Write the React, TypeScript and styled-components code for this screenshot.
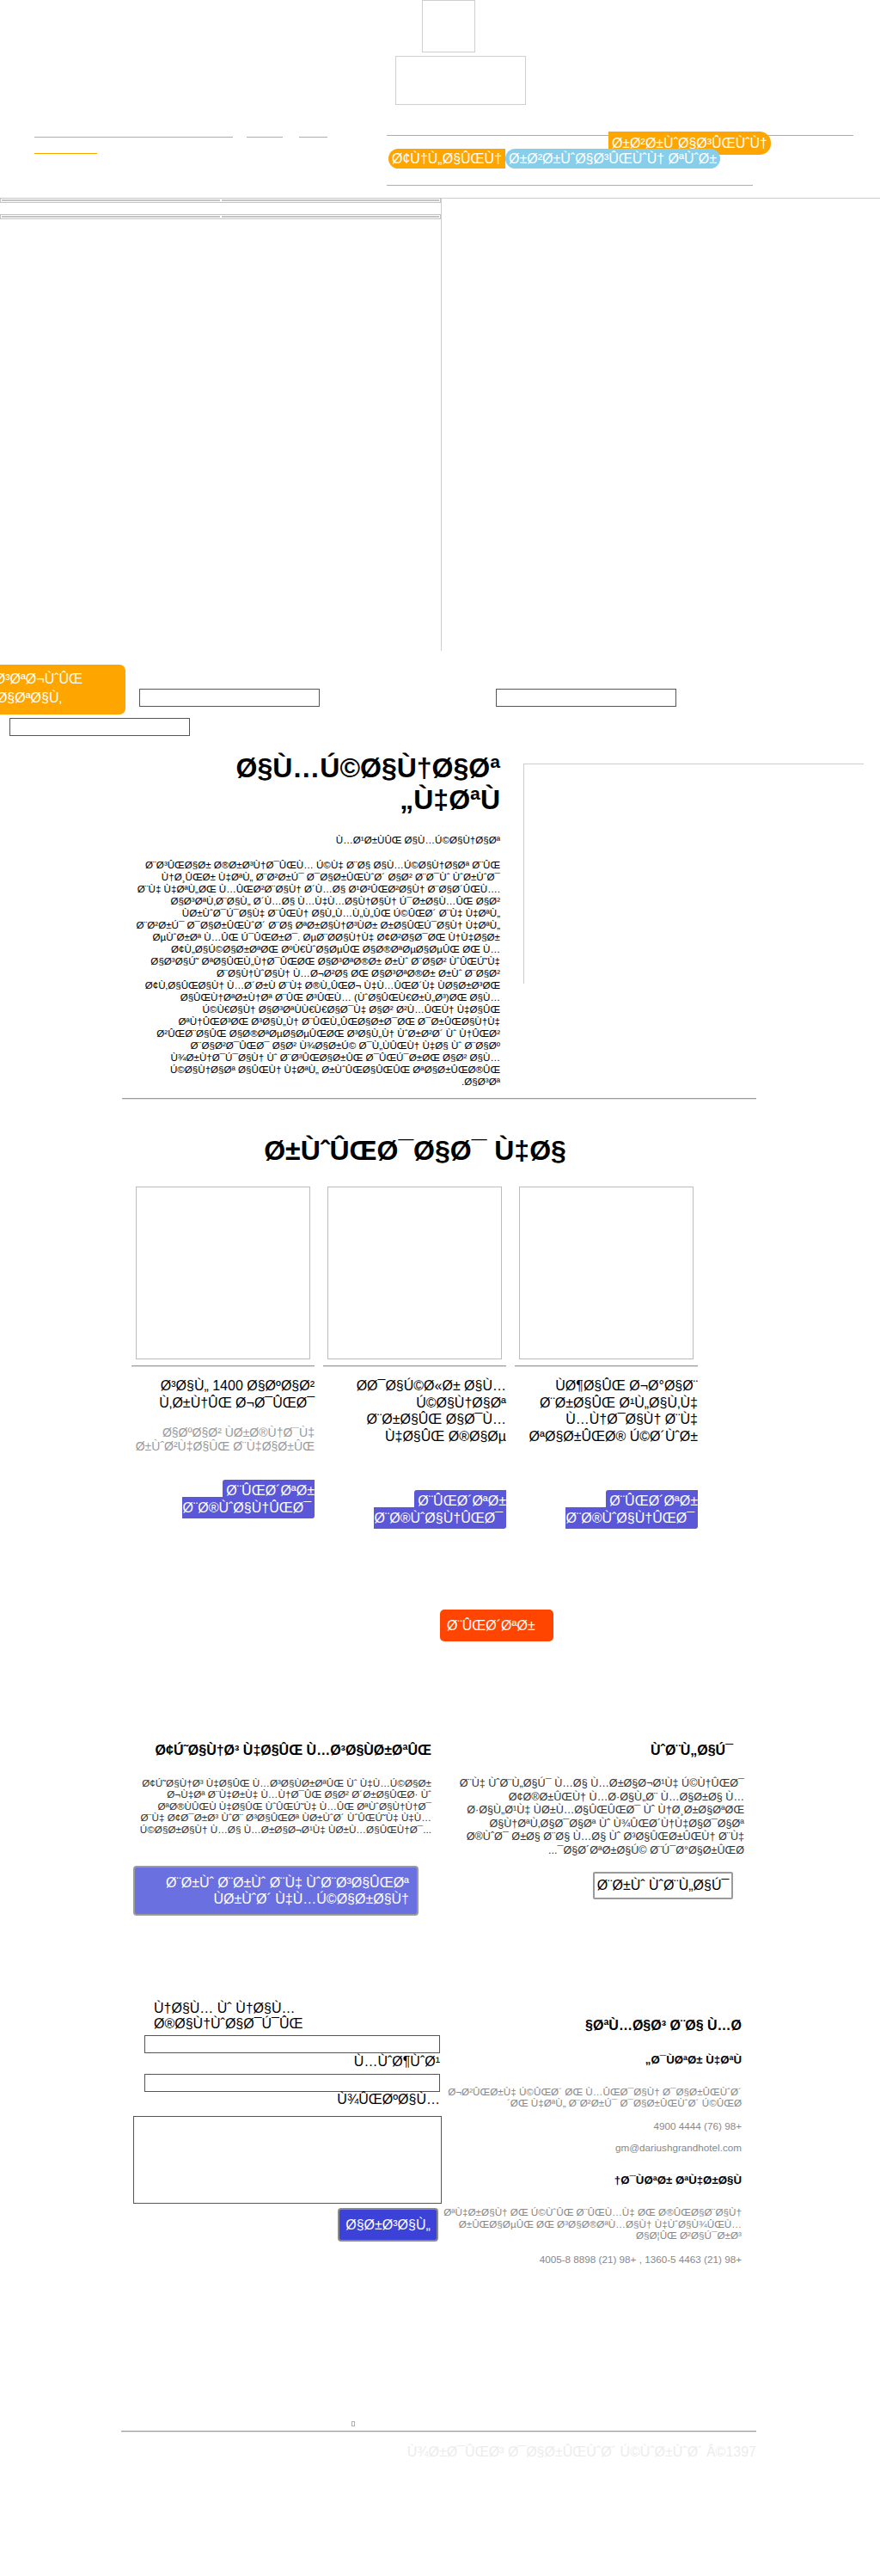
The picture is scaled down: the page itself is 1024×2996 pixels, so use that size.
import React from "react";
import styled, { createGlobalStyle } from "styled-components";

// the page was served as UTF-8 but read as windows-1252, so every Persian
// string shows up as Latin mojibake. Rebuild that from the real text.
// 0x81 has no cp1252 glyph and shows as nothing.
const CP1252: Record<number, string> = {
  0x80: "\u20AC", 0x81: "", 0x82: "\u201A", 0x83: "\u0192", 0x84: "\u201E", 0x85: "\u2026",
  0x86: "\u2020", 0x87: "\u2021", 0x88: "\u02C6", 0x89: "\u2030", 0x8a: "\u0160",
  0x8b: "\u2039", 0x8c: "\u0152", 0x8d: "", 0x8e: "\u017D", 0x8f: "", 0x90: "",
  0x91: "\u2018", 0x92: "\u2019", 0x93: "\u201C", 0x94: "\u201D", 0x95: "\u2022",
  0x96: "\u2013", 0x97: "\u2014", 0x98: "\u02DC", 0x99: "\u2122", 0x9a: "\u0161",
  0x9b: "\u203A", 0x9c: "\u0153", 0x9d: "", 0x9e: "\u017E", 0x9f: "\u0178",
};
const moj = (s: string) =>
  Array.from(new TextEncoder().encode(s), (b) => CP1252[b] ?? String.fromCharCode(b)).join("");

const ORANGE = "#ffa500";

const GlobalStyle = createGlobalStyle`
  html, body { margin: 0; padding: 0; background: #fff; }
  body { font-family: "Liberation Sans", Arial, sans-serif; color: #000; }
  * { box-sizing: border-box; }
`;

const Page = styled.div`
  width: 1024px;
  min-height: 2996px;
  overflow: hidden;
`;

/* ---------- header ---------- */

const Header = styled.header`
  display: flex;
  flex-direction: column;
  height: 122px;
`;

const LogoFrame = styled.div<{ $w: number; $h: number; $x: number; $top?: number }>`
  width: ${(p) => p.$w}px;
  height: ${(p) => p.$h}px;
  margin-left: ${(p) => p.$x}px;
  margin-top: ${(p) => p.$top ?? 0}px;
  border: 1px solid #cfcfcf;
`;

const NavBar = styled.nav`
  display: flex;
  height: 108px;
  padding-top: 25px;
`;

const LeftNav = styled.div`
  width: 450px;
  padding-left: 40px;
  display: flex;
  flex-direction: column;
`;

const LeftNavRow = styled.div<{ $h: number }>`
  display: flex;
  height: ${(p) => p.$h}px;
`;

const NavLink = styled.a<{ $w: number; $gap?: number }>`
  display: block;
  width: ${(p) => p.$w}px;
  height: 100%;
  margin-right: ${(p) => p.$gap ?? 0}px;
  border-bottom: 1px solid ${ORANGE};
`;

const RightNav = styled.div`
  width: 543px;
  display: flex;
  flex-direction: column;
  padding-top: 10px;
`;

const NavRowTop = styled.div`
  display: flex;
  justify-content: flex-end;
  height: 16px;
  padding-right: 96px;
  border-top: 1px solid ${ORANGE};
`;

const NavRow = styled.div`
  display: flex;
  height: 24px;
  padding-left: 2px;
`;

const NavRule = styled.div`
  width: 426px;
  margin-top: 18px;
  border-top: 1px solid ${ORANGE};
`;

const radius = { right: "0 13px 13px 0", left: "13px 0 0 13px", both: "13px" };

const Pill = styled.a<{ $bg: string; $round: keyof typeof radius; $h: number; $up?: number }>`
  display: inline-flex;
  align-items: center;
  height: ${(p) => p.$h}px;
  margin-top: ${(p) => -(p.$up ?? 0)}px;
  padding: 0 4px;
  background: ${(p) => p.$bg};
  border-radius: ${(p) => radius[p.$round]};
  color: #fff;
  font-size: 16px;
  white-space: nowrap;
`;

/* ---------- hero ---------- */

const Hero = styled.section`
  display: flex;
`;

const HeroSide = styled.div`
  width: 513px;
  display: flex;
  flex-direction: column;
  gap: 13px;
`;

const EmptyTable = styled.div`
  display: flex;
  gap: 2px;
  padding: 1px;
  border: 1px solid #c4c4c4;
`;

const EmptyCell = styled.div`
  flex: 1;
  height: 2px;
  border: 1px solid #c4c4c4;
`;

const InsetFrame = styled.div<{ $w: number; $h: number; $top?: number }>`
  width: ${(p) => p.$w}px;
  height: ${(p) => p.$h}px;
  margin-top: ${(p) => p.$top ?? 0}px;
  flex-shrink: 0;
  border-top: 1px solid #cdcdcd;
  border-left: 1px solid #cdcdcd;
`;

/* ---------- search ---------- */

const SearchRow = styled.div`
  display: flex;
  align-items: flex-start;
  margin-top: 16px;
  height: 58px;
`;

const SearchTab = styled.div`
  flex-shrink: 0;
  width: 224px;
  height: 58px;
  margin-left: -78px;
  padding: 6px 14px 0;
  background: ${ORANGE};
  border-radius: 0 7px 7px 0;
  color: #fff;
  font-size: 16px;
  line-height: 22px;
  text-align: center;
`;

const TextInput = styled.input<{ $x: number; $top?: number; $w?: number }>`
  display: block;
  width: ${(p) => p.$w ?? 210}px;
  height: 21px;
  margin: ${(p) => p.$top ?? 0}px 0 0 ${(p) => p.$x}px;
  padding: 1px 2px;
  border: 1px solid #555;
  background: #fff;
  font: 13px "Liberation Sans", Arial, sans-serif;
`;

/* ---------- about ---------- */

const About = styled.section`
  display: flex;
  gap: 27px;
  margin-top: 19px;
  padding-left: 157px;
`;

const AboutText = styled.div`
  width: 425px;
  direction: rtl;
  text-align: right;
`;

const BigTitle = styled.h2<{ $center?: boolean }>`
  margin: 0;
  font-size: 32px;
  line-height: 37px;
  font-weight: bold;
  ${(p) => (p.$center ? "text-align: center; direction: ltr;" : "")}
`;

const Lead = styled.p`
  margin: 21px 0 15px;
  font-size: 11.6px;
  line-height: 14px;
`;

const BodyText = styled.p`
  margin: 0;
  font-size: 11.6px;
  line-height: 14px;
`;

const Rule = styled.hr<{ $top: number; $x?: number; $w?: number }>`
  width: ${(p) => p.$w ?? 738}px;
  height: 0;
  margin: ${(p) => p.$top}px 0 0 ${(p) => p.$x ?? 142}px;
  border: 0;
  border-top: 1px solid #9c9c9c;
  border-bottom: 1px solid #e2e2e2;
`;

/* ---------- events ---------- */

const Events = styled.section`
  width: 660px;
  margin: 41px 0 0 153px;
`;

const CardGrid = styled.div`
  display: grid;
  grid-template-columns: repeat(3, 213px);
  column-gap: 10px;
  margin-top: 23px;
`;

const Card = styled.article`
  display: flex;
  flex-direction: column;
  text-align: right;
`;

const CardPicture = styled.div`
  height: 201px;
  margin: 0 5px;
  border: 1px solid #bdbdbd;
`;

const CardRule = styled.div`
  margin-top: 7px;
  border-top: 1px solid #9c9c9c;
  border-bottom: 1px solid #e2e2e2;
`;

const CardTitle = styled.h3<{ $measure: number }>`
  align-self: flex-end;
  max-width: ${(p) => p.$measure}px;
  margin: 12px 0 0;
  font-size: 16px;
  line-height: 19.5px;
  font-weight: normal;
`;

const CardNote = styled.p`
  margin: 17px 0 0;
  font-size: 14px;
  line-height: 16px;
  color: #9a9a9a;
`;

const CardAction = styled.div<{ $gap: number }>`
  margin-top: ${(p) => p.$gap}px;
  font-size: 16px;
  line-height: 20px;
`;

const ReadMore = styled.a`
  padding: 4px 4px;
  background: #5a57d8;
  color: #fff;
  border-radius: 3px;
  -webkit-box-decoration-break: slice;
  box-decoration-break: slice;
`;

const MoreRow = styled.div`
  margin: 96px 0 0 512px;
`;

const MoreButton = styled.a`
  display: block;
  width: 132px;
  height: 37px;
  padding: 9px 8px;
  background: #ff4500;
  border-radius: 5px;
  color: #fff;
  font-size: 16px;
  line-height: 19px;
`;

/* ---------- partners / blog ---------- */

const Split = styled.section<{ $top: number }>`
  display: flex;
  align-items: flex-start;
  margin-top: ${(p) => p.$top}px;
  padding-left: 155px;
`;

const Column = styled.div<{ $w: number; $x?: number }>`
  width: ${(p) => p.$w}px;
  margin-left: ${(p) => p.$x ?? 0}px;
  text-align: right;
  display: flex;
  flex-direction: column;
`;

const SmallTitle = styled.h4<{ $pr?: number }>`
  margin: 0;
  padding-right: ${(p) => p.$pr ?? 0}px;
  font-size: 16px;
  line-height: 18px;
  font-weight: bold;
`;

const Blurb = styled.p<{ $size: number; $lh: number; $rtl?: boolean }>`
  margin: 22px 0 0;
  font-size: ${(p) => p.$size}px;
  line-height: ${(p) => p.$lh}px;
  color: #333;
  direction: ${(p) => (p.$rtl ? "rtl" : "ltr")};
`;

const FilledButton = styled.a`
  align-self: flex-start;
  width: 332px;
  margin-top: 36px;
  padding: 8px 9px;
  background: #6b70e0;
  border: 2px solid #9a9a9a;
  border-radius: 4px;
  color: #fff;
  font-size: 16px;
  line-height: 19px;
  text-align: right;
`;

const OutlineButton = styled.a`
  align-self: flex-end;
  width: 163px;
  height: 32px;
  margin: 16px 13px 0 0;
  padding-top: 5px;
  border: 2px solid #9a9a9a;
  border-radius: 2px;
  background: #fff;
  color: #000;
  font-size: 16px;
  line-height: 18px;
  text-align: center;
`;

/* ---------- contact ---------- */

const FormColumn = styled.form`
  width: 359px;
  display: flex;
  flex-direction: column;
`;

const NameLabel = styled.label`
  width: 180px;
  margin-left: 24px;
  font-size: 16px;
  line-height: 18px;
`;

const FieldLabel = styled.label<{ $top?: number }>`
  margin-top: ${(p) => p.$top ?? 0}px;
  padding-right: 2px;
  font-size: 16px;
  line-height: 18px;
  text-align: right;
`;

const MessageBox = styled.textarea`
  width: 359px;
  height: 102px;
  margin-top: 10px;
  border: 1px solid #555;
  resize: none;
`;

const SubmitButton = styled.button`
  align-self: flex-end;
  width: 117px;
  height: 39px;
  margin: 5px 4px 0 0;
  background: #3c42d8;
  border: 2px solid #8a8a8a;
  border-radius: 4px;
  color: #fff;
  font: 16px "Liberation Sans", Arial, sans-serif;
`;

const InfoColumn = styled.div`
  width: 350px;
  margin-left: -1px;
  direction: rtl;
  text-align: right;
`;

const InfoTitle = styled.h4<{ $top: number }>`
  margin: ${(p) => p.$top}px 0 0;
  font-size: 16px;
  line-height: 18px;
`;

const InfoSub = styled.h5<{ $top: number }>`
  margin: ${(p) => p.$top}px 0 0;
  font-size: 13.28px;
  line-height: 16px;
`;

const InfoLine = styled.p<{ $top: number }>`
  margin: ${(p) => p.$top}px 0 0;
  font-size: 11.7px;
  line-height: 13.3px;
  color: #888;
`;

/* ---------- footer ---------- */

const Footer = styled.footer`
  margin-top: 182px;
`;

const Tofu = styled.span`
  display: block;
  width: 4px;
  height: 6px;
  margin-left: 409px;
  border: 1px solid #b0b0b0;
`;

const Copyright = styled.p`
  width: 739px;
  margin: 13px 0 0 141px;
  font-size: 16px;
  line-height: 20px;
  color: #ececec;
  text-align: right;
`;

const ABOUT =
  "بسیار خرسندیم که با امکانات بی نظیر هتل بزرگ داریوش از بدو ورود به هتل، میزبان شما عزیزان باشیم. استقبال شما مهمانان گرامی از فرودگاه بین المللی کیش به هتل بزرگ داریوش با ترانسفر رایگان هتل صورت می گیرد. صبحانه آزاد، نهار آلاکارت، غـواصی اختصاصی ، ماساژ تایلندی، استخر رو باز ویژه بانوان مجزا ، استخر رو باز آقایان مشرف به خلیج همیشه فارس، اینترنت بی سیم (وایـرلس)، امکـان استفــاده از زمین های تنیس، سالن بیلیارد، دریانه زیبای اختصاصی، سالن ورزش و نیز بازدید از پارک دلفین ها و باغ پرندگان و بسیاری دیگر، از امکانات این هتل رویایی تاریخی است.";

const EVENTS = [
  { title: "سال 1400 اغاز قرنی جدید", note: "اغاز فرخنده روزهای بهاری", gap: 34, measure: 213 },
  { title: "حداکثر امکانات برای ادم های خاص", gap: 56, measure: 190 },
  { title: "فضای جذاب برای علاقه مندان به تاریخ کشور", gap: 56, measure: 213 },
];

export default function App() {
  return (
    <Page>
      <GlobalStyle />
      <Header>
        <LogoFrame $w={62} $h={62} $x={491} />
        <LogoFrame $w={152} $h={57} $x={460} $top={4} />
      </Header>

      <NavBar>
        <LeftNav>
          <LeftNavRow $h={13}>
            <NavLink $w={231} $gap={16} />
            <NavLink $w={42} $gap={19} />
            <NavLink $w={33} />
          </LeftNavRow>
          <LeftNavRow $h={19}>
            <NavLink $w={73} />
          </LeftNavRow>
        </LeftNav>
        <RightNav>
          <NavRowTop>
            <Pill $bg={ORANGE} $round="right" $h={27} $up={5}>{moj("رزرواسیون")}</Pill>
          </NavRowTop>
          <NavRow>
            <Pill $bg={ORANGE} $round="left" $h={23}>{moj("آنلاین")}</Pill>
            <Pill $bg="#87ceeb" $round="both" $h={23}>{moj("رزرواسیون تور")}</Pill>
          </NavRow>
          <NavRule />
        </RightNav>
      </NavBar>

      <Hero>
        <HeroSide>
          <EmptyTable><EmptyCell /><EmptyCell /></EmptyTable>
          <EmptyTable><EmptyCell /><EmptyCell /></EmptyTable>
        </HeroSide>
        <InsetFrame $w={511} $h={527} />
      </Hero>

      <SearchRow>
        <SearchTab>{moj("جستجوی اتاق")}</SearchTab>
        <TextInput $x={16} $top={28} />
        <TextInput $x={205} $top={28} />
      </SearchRow>
      <TextInput $x={11} $top={4} />

      <About>
        <AboutText>
          <BigTitle>{moj("امکانات هتل")}</BigTitle>
          <Lead>{moj("معرفی امکانات")}</Lead>
          <BodyText>{moj(ABOUT)}</BodyText>
        </AboutText>
        <InsetFrame $w={396} $h={256} $top={13} />
      </About>

      <Rule $top={12} />

      <Events>
        <BigTitle $center>{moj("رویداد ها")}</BigTitle>
        <CardGrid>
          {EVENTS.map((e) => (
            <Card key={e.title}>
              <CardPicture />
              <CardRule />
              <CardTitle $measure={e.measure}>{moj(e.title)}</CardTitle>
              {e.note ? <CardNote>{moj(e.note)}</CardNote> : null}
              <CardAction $gap={e.gap}>
                <ReadMore>{moj("بیشتر بخوانید")}</ReadMore>
              </CardAction>
            </Card>
          ))}
        </CardGrid>
      </Events>

      <MoreRow>
        <MoreButton>{moj("بیشتر")}</MoreButton>
      </MoreRow>

      <Split $top={118}>
        <Column $w={347}>
          <SmallTitle>{moj("آژانس های مسافرتی")}</SmallTitle>
          <Blurb $size={11.7} $lh={13.4}>
            {moj(
              "آژانس های مسافرتی و همکار جهت بهره مندی از شرایط و تخفیف های ویژه می توانند به آدرس وب سایت فروش ویژه همکاران ما مراجعه فرمایند..."
            )}
          </Blurb>
          <FilledButton>{moj("برو برو به وبسایت فروش همکاران")}</FilledButton>
        </Column>
        <Column $w={336} $x={28}>
          <SmallTitle $pr={13}>{moj("وبلاگ")}</SmallTitle>
          <Blurb $size={12.6} $lh={15.6} $rtl>
            {moj(
              "به وبلاگ ما مراجعه کنید آخرین مطالب مارا مطالعه فرمایید و نظرات، انتقادات و پیشنهادات خود را با ما و سایرین به اشتراک بگذارید..."
            )}
          </Blurb>
          <OutlineButton>{moj("برو وبلاگ")}</OutlineButton>
        </Column>
      </Split>

      <Split $top={99}>
        <FormColumn onSubmit={(ev) => ev.preventDefault()}>
          <NameLabel>{moj("نام و نام خانوادگی")}</NameLabel>
          <TextInput $x={13} $top={4} $w={344} />
          <FieldLabel $top={1}>{moj("موضوع")}</FieldLabel>
          <TextInput $x={13} $top={5} $w={344} />
          <FieldLabel>{moj("پیغام")}</FieldLabel>
          <MessageBox />
          <SubmitButton type="submit">{moj("ارسال")}</SubmitButton>
        </FormColumn>
        <InfoColumn>
          <InfoTitle $top={20}>{moj("تماس با ما")}</InfoTitle>
          <InfoSub $top={23}>{moj("دفتر هتل")}</InfoSub>
          <InfoLine $top={22}>{moj("جزیره کیش ، میدان داریوش ، هتل بزرگ داریوش کیش")}</InfoLine>
          <InfoLine $top={13}>+98 (76) 4444 4900</InfoLine>
          <InfoLine $top={12}>gm@dariushgrandhotel.com</InfoLine>
          <InfoSub $top={24}>{moj("دفتر تهران")}</InfoSub>
          <InfoLine $top={22}>
            {moj("تهران ، کوی بیمه ، خیابان ریاصی ، ساختمان هواپیمائی زاگرس")}
          </InfoLine>
          <InfoLine $top={15}>+98 (21) 4463 1360-5 , +98 (21) 8898 4005-8</InfoLine>
        </InfoColumn>
      </Split>

      <Footer>
        <Tofu />
        <Rule $top={5} $x={141} $w={739} />
        <Copyright>{moj("پردیس داریوش کوروش ©1397")}</Copyright>
      </Footer>
    </Page>
  );
}
